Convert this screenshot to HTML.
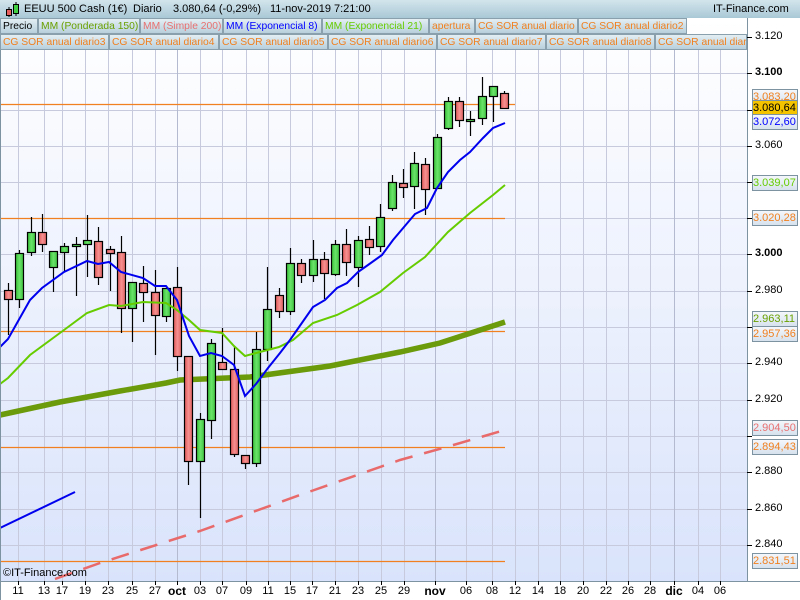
<!DOCTYPE html>
<html><head><meta charset="utf-8"><style>
*{margin:0;padding:0;box-sizing:border-box}
body{width:800px;height:600px;overflow:hidden;background:#fff;font-family:"Liberation Sans",sans-serif;position:relative}
#hdr{position:absolute;left:0;top:0;width:800px;height:18px;background:linear-gradient(#d3e5ec,#a9c8d6);font-size:11px;color:#000}
#hdr span{position:absolute;top:3px;white-space:nowrap}
.row{position:absolute;left:0;height:16px;font-size:10.3px}
.row span{position:absolute;top:0;height:16px;line-height:15px;padding-left:2px;border:1px solid #8aa0ac;background:linear-gradient(#e3eef3,#b8d0dc);white-space:nowrap;overflow:hidden}
.o{color:#f08020}
.box{position:absolute;left:752px;width:46px;height:16px;font-size:11px;line-height:14px;text-align:right;padding-right:2px;border:1px solid #7d93a2;background:linear-gradient(#f4f7fb,#d6e2ee)}
.yl{position:absolute;left:755px;font-size:11px;color:#000}
.xl{position:absolute;top:585px;font-size:11px;color:#000;transform:translateX(-50%)}
</style></head><body>
<svg width="800" height="600" style="position:absolute;left:0;top:0" id="s">
<defs>
<linearGradient id="bg" x1="0" y1="0" x2="0" y2="1"><stop offset="0" stop-color="#ffffff"/><stop offset="1" stop-color="#d9e3fb"/></linearGradient>
<linearGradient id="gr" x1="0" y1="0" x2="1" y2="0"><stop offset="0" stop-color="#37c037"/><stop offset="0.5" stop-color="#6ae46a"/><stop offset="1" stop-color="#3cc03c"/></linearGradient>
<linearGradient id="rd" x1="0" y1="0" x2="1" y2="0"><stop offset="0" stop-color="#e05858"/><stop offset="0.5" stop-color="#f59090"/><stop offset="1" stop-color="#e06060"/></linearGradient>
</defs>
<rect x="0" y="18" width="747" height="563" fill="url(#bg)"/>
<g id="grid" stroke="#c6cadc" stroke-width="1"></g>
<g stroke="#f08020" stroke-width="1.2">
<line x1="0" y1="104.5" x2="515" y2="104.5"/>
<line x1="0" y1="218.5" x2="505" y2="218.5"/>
<line x1="0" y1="331.5" x2="505" y2="331.5"/>
<line x1="0" y1="447.5" x2="505" y2="447.5"/>
<line x1="0" y1="561.5" x2="505" y2="561.5"/>
</g>
<polyline fill="none" stroke="#6b9a0a" stroke-width="5.5" points="0,415 60,402 120,391 166,383 180,380 250,377 330,366 400,352 440,343 505,322"/>
<polyline fill="none" stroke="#e86a6a" stroke-width="2.5" stroke-dasharray="18,12" points="55,579 100,563 200,531 300,495 400,460 450,446 505,430"/>
<line x1="0" y1="528" x2="75" y2="492" stroke="#0000ee" stroke-width="2"/>
<g id="candles"></g>
<polyline fill="none" stroke="#66cc00" stroke-width="2" points="0,384 8,378 30,355 64,330 87,313 109,305 121,306 143,302 166,303 177,310 189,320 200,330 222,333 234,346 245,356 256,353 279,347 293,340 313,323 337,315 357,305 380,292 403,273 425,257 448,232 470,213 493,195 505,185"/>
<polyline fill="none" stroke="#0000ee" stroke-width="2" points="0,347 8,339 30,300 42,288 64,272 87,261 98,264 109,262 121,272 143,278 155,286 166,286 177,300 189,336 200,356 211,353 222,356 234,365 245,396 256,384 268,368 280,353 290,340 313,307 325,300 337,288 347,283 358,272 368,265 382,255 393,240 415,214 427,208 437,188 448,172 460,160 470,152 483,138 493,128 505,123"/>
<line x1="747.5" y1="18" x2="747.5" y2="581" stroke="#7d93a2"/>
<line x1="0" y1="581.5" x2="800" y2="581.5" stroke="#7d93a2"/>
<line x1="0.5" y1="18" x2="0.5" y2="600" stroke="#7d93a2"/>
<g id="ticks" stroke="#000"></g>
</svg>
<div id="hdr">
<svg width="20" height="18" style="position:absolute;left:3px;top:0"><line x1="6" y1="7" x2="6" y2="17" stroke="#000"/><rect x="3.5" y="9.5" width="5" height="6" fill="#e86060" stroke="#000"/><line x1="13" y1="2" x2="13" y2="16" stroke="#000"/><rect x="10.5" y="4.5" width="5" height="9" fill="#44d044" stroke="#000"/></svg>
<span style="left:24px">EEUU 500 Cash (1€)</span>
<span style="left:133px">Diario</span>
<span style="left:173px">3.080,64 (-0,29%)</span>
<span style="left:270px">11-nov-2019 7:21:00</span>
<span style="left:713px">IT-Finance.com</span>
</div>
<div class="row" style="top:18px">
<span style="left:0;width:38px">Precio</span>
<span style="left:38px;width:102px;color:#6aa000">MM (Ponderada 150)</span>
<span style="left:140px;width:83px;color:#e87070">MM (Simple 200)</span>
<span style="left:223px;width:99px;color:#0000ff">MM (Exponencial 8)</span>
<span style="left:322px;width:107px;color:#66cc00">MM (Exponencial 21)</span>
<span style="left:429px;width:46px" class="o">apertura</span>
<span style="left:475px;width:103px" class="o">CG SOR anual diario</span>
<span style="left:578px;width:109px" class="o">CG SOR anual diario2</span>
</div>
<div class="row" style="top:34px">
<span style="left:0;width:109px" class="o">CG SOR anual diario3</span>
<span style="left:109px;width:110px" class="o">CG SOR anual diario4</span>
<span style="left:219px;width:109px" class="o">CG SOR anual diario5</span>
<span style="left:328px;width:109px" class="o">CG SOR anual diario6</span>
<span style="left:437px;width:109px" class="o">CG SOR anual diario7</span>
<span style="left:546px;width:109px" class="o">CG SOR anual diario8</span>
<span style="left:655px;width:92px" class="o">CG SOR anual diario9</span>
</div>
<div class="yl" style="top:30px">3.120</div>
<div class="yl" style="top:66px;font-weight:bold">3.100</div>
<div class="yl" style="top:139px">3.060</div>
<div class="yl" style="top:247px;font-weight:bold">3.000</div>
<div class="yl" style="top:284px">2.980</div>
<div class="yl" style="top:356px">2.940</div>
<div class="yl" style="top:393px">2.920</div>
<div class="yl" style="top:465px">2.880</div>
<div class="yl" style="top:502px">2.860</div>
<div class="yl" style="top:538px">2.840</div>
<div class="box o" style="top:89px">3.083,20</div>
<div class="box" style="top:100px;background:#f5c400;color:#000">3.080,64</div>
<div class="box" style="top:114px;color:#0000ff">3.072,60</div>
<div class="box" style="top:175px;color:#66cc00">3.039,07</div>
<div class="box o" style="top:210px">3.020,28</div>
<div class="box" style="top:311px;color:#6aa000">2.963,11</div>
<div class="box o" style="top:326px">2.957,36</div>
<div class="box" style="top:420px;color:#e87070">2.904,50</div>
<div class="box o" style="top:439px">2.894,43</div>
<div class="box o" style="top:553px">2.831,51</div>
<div style="position:absolute;left:3px;top:567px;font-size:11px">©IT-Finance.com</div>
<div id="xls"></div>
<script>
var NS="http://www.w3.org/2000/svg";
function el(t,a,p){var e=document.createElementNS(NS,t);for(var k in a)e.setAttribute(k,a[k]);p.appendChild(e);return e;}
var grid=document.getElementById('grid');
[37,73,110,146,182,218,254,291,327,363,400,436,472,509,545].forEach(function(y){el('line',{x1:0,y1:y+.5,x2:747,y2:y+.5},grid);});
var xs=[["11",18],["13",44],["17",62],["19",85],["23",108],["25",132],["27",155],["oct",177],["03",200],["07",222],["09",246],["11",268],["15",290],["17",312],["21",335],["23",358],["25",381],["29",404],["nov",435],["06",466],["08",492],["12",515],["14",538],["18",560],["20",583],["22",606],["26",628],["28",650],["dic",674],["04",698],["06",720]];
var ticks=document.getElementById('ticks'),h='';
xs.forEach(function(d){var b=isNaN(+d[0]);el('line',{x1:d[1]+.5,y1:50,x2:d[1]+.5,y2:581,stroke:b?'#b4bad0':'#c6cadc'},grid);el('line',{x1:d[1]+.5,y1:581,x2:d[1]+.5,y2:585},ticks);h+='<div class="xl" style="left:'+d[1]+'px;'+(b?'font-weight:bold;font-size:12px;top:584px':'')+'">'+d[0]+'</div>';});
document.getElementById('xls').innerHTML=h;
[37,73,110,146,182,218,254,291,327,363,400,436,472,509,545].forEach(function(y){el('line',{x1:747,y1:y+.5,x2:752,y2:y+.5},ticks);});
var C=[["r",290,299,283,335],["g",253,299,250,308],["g",232,252,217,256],["r",232,244,214,252],["g",251,267,251,292],["g",246,252,243,272],["g",244,246,237,296],["g",240,244,215,277],["r",241,277,227,285],["r",249,253,246,291],["r",252,308,236,333],["g",282,308,282,342],["r",283,292,266,322],["r",292,315,270,355],["g",288,316,288,322],["r",287,356,267,371],["r",356,461,356,485],["g",419,461,413,518],["g",343,420,339,439],["r",362,369,328,369],["r",369,454,347,457],["r",455,463,455,469],["g",349,463,332,467],["g",309,349,267,361],["r",295,311,288,318],["g",263,311,248,315],["r",263,275,259,283],["g",259,275,240,282],["r",259,273,252,299],["g",244,274,240,276],["r",244,262,229,276],["g",240,267,236,287],["r",239,247,226,255],["g",217,246,204,252],["g",182,208,175,211],["r",183,187,169,198],["g",163,186,152,209],["r",164,189,158,215],["g",137,188,134,188],["g",101,128,97,130],["r",101,120,97,127],["g",119,121,111,136],["g",96,118,77,125],["g",86,96,86,122],["r",93,108,91,109]];
var cg=document.getElementById('candles');
C.forEach(function(c,i){var x=Math.round(8+11.28*i)+.5;el('line',{x1:x,y1:c[3],x2:x,y2:c[4],stroke:'#000','stroke-width':1.2},cg);el('rect',{x:x-4,y:c[1]+.5,width:8,height:Math.max(c[2]-c[1],1.5),fill:c[0]=='g'?'url(#gr)':'url(#rd)',stroke:'#000','stroke-width':1.2},cg);});
</script>
</body></html>
